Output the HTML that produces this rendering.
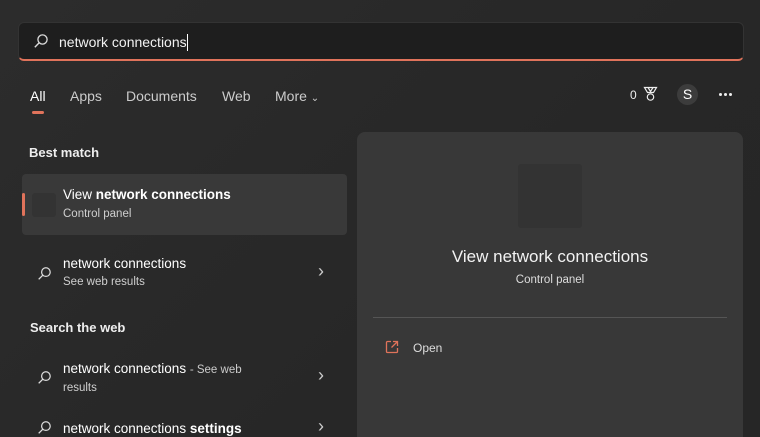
<!DOCTYPE html>
<html><head><meta charset="utf-8"><style>
*{margin:0;padding:0;box-sizing:border-box}
html,body{width:760px;height:437px;overflow:hidden}
body{background:linear-gradient(135deg,#2c2c2c,#272727 60%,#262626);font-family:"Liberation Sans",sans-serif;color:#fff;position:relative}
.a{position:absolute;white-space:nowrap}
.search{left:18px;top:22px;width:726px;height:39px;background:#1e1e1e;border:1px solid #333;border-radius:6px;border-bottom:2px solid #e0735b}
.sub{color:#cfcfcf;font-size:11.5px}
.t{font-size:13.5px;color:#fff}
.chev{color:#ccc;font-size:18px}
</style></head><body>
<div class="a search"></div>
<svg class="a" style="left:33px;top:33px" width="16" height="16" viewBox="0 0 16 16"><circle cx="9.5" cy="6.5" r="4.6" fill="none" stroke="#ddd" stroke-width="1.3"/><path d="M6.2 9.8 L1.8 14.2" stroke="#ddd" stroke-width="1.4"/></svg>
<div class="a" style="left:59px;top:34px;font-size:14px;color:#f2f2f2">network connections<span style="display:inline-block;width:1px;height:17px;background:#fff;vertical-align:-4px"></span></div>

<div class="a" style="left:30px;top:88px;font-size:14px">All</div>
<div class="a" style="left:32px;top:111px;width:12px;height:3px;border-radius:2px;background:#e0735b"></div>
<div class="a" style="left:70px;top:88px;font-size:14px;color:#ccc">Apps</div>
<div class="a" style="left:126px;top:88px;font-size:14px;color:#ccc">Documents</div>
<div class="a" style="left:222px;top:88px;font-size:14px;color:#ccc">Web</div>
<div class="a" style="left:275px;top:88px;font-size:14px;color:#ccc">More <span style="font-size:10px">&#8964;</span></div>

<div class="a" style="left:630px;top:88px;font-size:12px;color:#eee">0</div>
<svg class="a" style="left:643px;top:86px" width="15" height="16" viewBox="0 0 15 16"><path d="M1.5 1.5h12l-3 5h-6z M5 1.5l2.5 4 2.5-4" fill="none" stroke="#eee" stroke-width="1.2"/><circle cx="7.5" cy="11" r="3.2" fill="none" stroke="#eee" stroke-width="1.2"/></svg>
<div class="a" style="left:677px;top:84px;width:21px;height:21px;border-radius:50%;background:#3c3c3c;font-size:14px;text-align:center;line-height:21px">S</div>
<div class="a" style="left:719px;top:93px;width:3px;height:3px;border-radius:50%;background:#eee;box-shadow:5px 0 #eee,10px 0 #eee"></div>

<div class="a" style="left:29px;top:145px;font-size:13px;font-weight:bold;color:#eee">Best match</div>
<div class="a" style="left:22px;top:174px;width:325px;height:61px;background:#393939;border-radius:4px"></div>
<div class="a" style="left:22px;top:193px;width:3px;height:23px;background:#e0735b;border-radius:2px"></div>
<div class="a" style="left:32px;top:193px;width:24px;height:24px;background:#333;border-radius:3px"></div>
<div class="a t" style="left:63px;top:187px">View <b>network connections</b></div>
<div class="a sub" style="left:63px;top:208px">Control panel</div>

<svg class="a" style="left:37px;top:266px" width="15" height="15" viewBox="0 0 16 16"><circle cx="9.5" cy="6.5" r="4.6" fill="none" stroke="#ddd" stroke-width="1.3"/><path d="M6.2 9.8 L1.8 14.2" stroke="#ddd" stroke-width="1.4"/></svg>
<div class="a t" style="left:63px;top:256px">network connections</div>
<div class="a sub" style="left:63px;top:276px">See web results</div>
<div class="a chev" style="left:318px;top:261px">&#8250;</div>

<div class="a" style="left:30px;top:320px;font-size:13px;font-weight:bold;color:#eee">Search the web</div>
<svg class="a" style="left:37px;top:370px" width="15" height="15" viewBox="0 0 16 16"><circle cx="9.5" cy="6.5" r="4.6" fill="none" stroke="#ddd" stroke-width="1.3"/><path d="M6.2 9.8 L1.8 14.2" stroke="#ddd" stroke-width="1.4"/></svg>
<div class="a t" style="left:63px;top:361px">network connections <span style="font-size:11.5px;color:#ccc">- See web</span></div>
<div class="a sub" style="left:63px;top:382px">results</div>
<div class="a chev" style="left:318px;top:365px">&#8250;</div>
<svg class="a" style="left:37px;top:420px" width="15" height="15" viewBox="0 0 16 16"><circle cx="9.5" cy="6.5" r="4.6" fill="none" stroke="#ddd" stroke-width="1.3"/><path d="M6.2 9.8 L1.8 14.2" stroke="#ddd" stroke-width="1.4"/></svg>
<div class="a t" style="left:63px;top:421px">network connections <b>settings</b></div>
<div class="a chev" style="left:318px;top:416px">&#8250;</div>

<div class="a" style="left:357px;top:132px;width:386px;height:305px;background:#383838;border-radius:8px 8px 0 0"></div>
<div class="a" style="left:518px;top:164px;width:64px;height:64px;background:#333;border-radius:3px"></div>
<div class="a" style="left:357px;top:247px;width:386px;text-align:center;font-size:17px;color:#f2f2f2">View network connections</div>
<div class="a" style="left:357px;top:274px;width:386px;text-align:center;font-size:11.5px;color:#ddd">Control panel</div>
<div class="a" style="left:373px;top:317px;width:354px;height:1px;background:#555"></div>
<svg class="a" style="left:385px;top:340px" width="14" height="14" viewBox="0 0 14 14"><path d="M6 1.5H2.5a1 1 0 0 0-1 1v9a1 1 0 0 0 1 1h9a1 1 0 0 0 1-1V8 M8 1.5h4.5V6 M12.5 1.5 6.5 7.5" fill="none" stroke="#e0735b" stroke-width="1.3"/></svg>
<div class="a" style="left:413px;top:341px;font-size:12px;color:#ddd">Open</div>
</body></html>
